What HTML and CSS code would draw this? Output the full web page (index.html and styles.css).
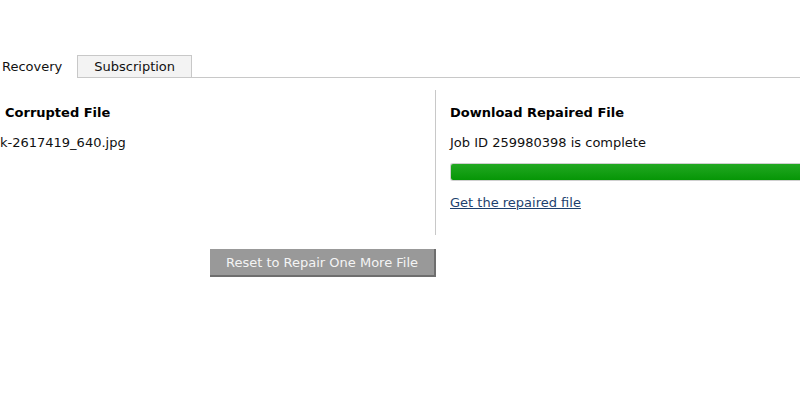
FILE: index.html
```html
<!DOCTYPE html>
<html>
  <head>
    <meta charset="utf-8" />
    <title>File Repair - Recovery</title>
    <link rel="stylesheet" href="styles.css">
  </head>
  <body>
    <div id="tab_bar">
      <div class="tab active">Recovery</div>
      <div class="tab">Subscription</div>
    </div>

    <div id="recovery">
      <div class="columns">
        <div class="col col_left">
          <h3>Corrupted File</h3>
          <p>k-2617419_640.jpg</p>
        </div>
        <div class="col col_right">
          <h3>Download Repaired File</h3>
          <p>Job ID 259980398 is complete</p>
          <div class="progress"><div class="progress_fill"></div></div>
          <a href="#" class="get_link">Get the repaired file</a>
        </div>
      </div>
      <div class="btn_row">
        <button id="reset_btn">Reset to Repair One More File</button>
      </div>
    </div>
  </body>
</html>
```

FILE: styles.css
```css
html, body
{
  margin: 0;
  padding: 0;
  background-color: #fff;
  width: 100%;
  height: 100%;
  overflow: hidden;
  font-family: "DejaVu Sans", Verdana, sans-serif;
  font-size: 13px;
  color: #111;
}
#tab_bar
{
  display: flex;
  margin-top: 55px;
  border-bottom: 1px solid #c8c8c8;
  height: 22px;
}
.tab
{
  padding: 0 16px;
  line-height: 21px;
  height: 21px;
  border: 1px solid #c8c8c8;
  border-bottom: none;
  background-color: #f3f3f3;
}
.tab.active
{
  padding: 0 14px 0 2px;
  background-color: #fff;
  border-color: #fff;
  border-left: none;
  height: 22px;
  position: relative;
  z-index: 1;
}
.columns
{
  display: flex;
  margin-top: 12px;
}
.col
{
  flex: none;
  padding: 15px 0 24px 0;
}
.col_left
{
  width: 435px;
  border-right: 1px solid #c8c8c8;
}
.col_left h3
{
  padding-left: 5px;
}
.col_right
{
  width: 350px;
  padding-left: 14px;
}
h3
{
  margin: 0;
  font-size: 13px;
  line-height: 16px;
  font-weight: bold;
  color: #000;
}
p
{
  margin: 14px 0 0 0;
  line-height: 16px;
}
.progress
{
  margin-top: 12px;
  height: 16px;
  border: 1px solid #d0d0d0;
  border-right: none;
  border-radius: 3px 0 0 3px;
  overflow: hidden;
}
.progress_fill
{
  height: 100%;
  width: 100%;
  background: linear-gradient(#22a822, #069606);
}
.get_link
{
  display: block;
  margin-top: 14px;
  line-height: 16px;
  color: #1c3f6e;
  text-decoration: underline;
}
.btn_row
{
  display: flex;
  justify-content: flex-end;
  width: 436px;
  margin-top: 14px;
}
#reset_btn
{
  font-family: "DejaVu Sans", Verdana, sans-serif;
  font-size: 13px;
  color: #f4f4f4;
  background-color: #999;
  border: none;
  border-right: 2px solid #6e6e6e;
  border-bottom: 2px solid #6e6e6e;
  width: 226px;
  height: 28px;
  padding: 0;
  cursor: pointer;
}
```
